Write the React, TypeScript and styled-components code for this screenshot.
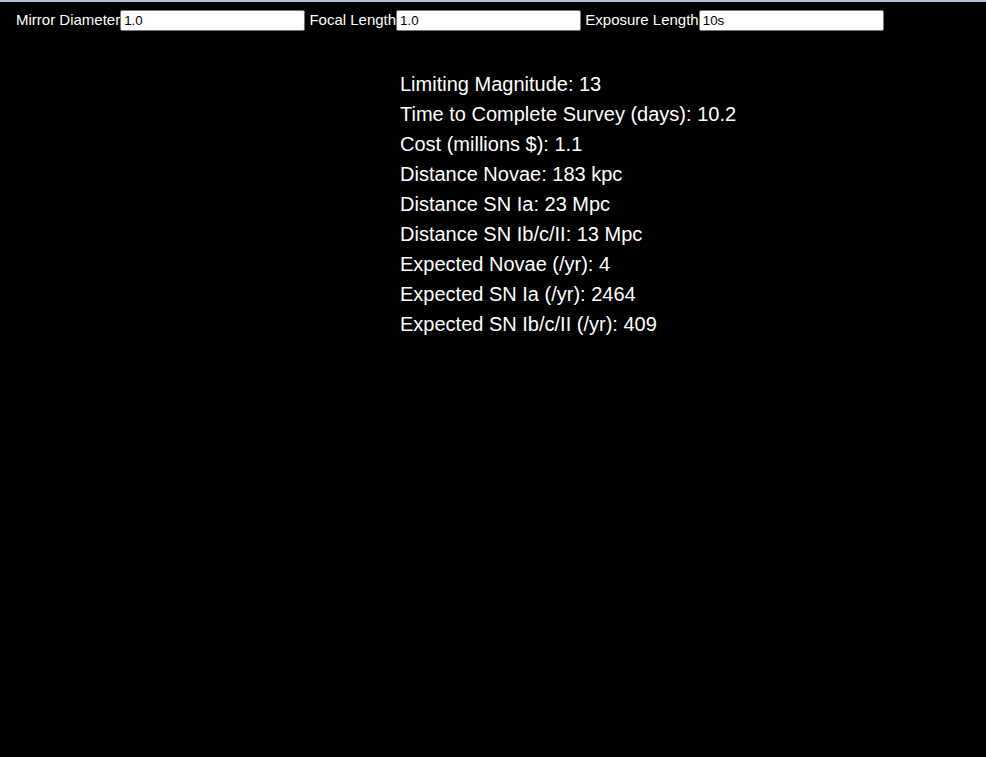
import React, { useState } from 'react'
import styled, { createGlobalStyle } from 'styled-components'

const GlobalStyle = createGlobalStyle`
  html, body {
    margin: 0;
    padding: 0;
    background: #000;
  }
  body {
    font-family: "Liberation Sans", Arial, sans-serif;
    color: #fff;
  }
`

const Page = styled.div`
  min-height: 757px;
  border-top: 2px solid #b3c0dc;
  background: #000;
`

const Toolbar = styled.div`
  display: flex;
  align-items: center;
  padding: 8px 16px 0;
  height: 21px;
`

const Field = styled.label`
  display: flex;
  align-items: baseline;
  font-size: 15px;
  line-height: 17px;
  color: #fff;
  & + & {
    margin-left: 4.2px;
  }
`

const Input = styled.input`
  box-sizing: border-box;
  width: 185px;
  height: 21px;
  margin: 0;
  padding: 1px 3px;
  border: 1px solid #767676;
  border-radius: 2px;
  background: #fff;
  color: #000;
  font-family: "Liberation Sans", Arial, sans-serif;
  font-size: 13.333px;
  outline: none;
`

const Results = styled.div`
  padding: 38px 0 0 400px;
`

const Line = styled.div`
  font-size: 20px;
  line-height: 30px;
  color: #fff;
`

function App() {
  const [diameter, setDiameter] = useState('1.0')
  const [focal, setFocal] = useState('1.0')
  const [exposure, setExposure] = useState('10s')

  const rows: [string, string][] = [
    ['Limiting Magnitude', '13'],
    ['Time to Complete Survey (days)', '10.2'],
    ['Cost (millions $)', '1.1'],
    ['Distance Novae', '183 kpc'],
    ['Distance SN Ia', '23 Mpc'],
    ['Distance SN Ib/c/II', '13 Mpc'],
    ['Expected Novae (/yr)', '4'],
    ['Expected SN Ia (/yr)', '2464'],
    ['Expected SN Ib/c/II (/yr)', '409'],
  ]

  return (
    <>
      <GlobalStyle />
      <Page>
        <Toolbar>
          <Field>
            Mirror Diameter
            <Input value={diameter} onChange={e => setDiameter(e.target.value)} />
          </Field>
          <Field>
            Focal Length
            <Input value={focal} onChange={e => setFocal(e.target.value)} />
          </Field>
          <Field>
            Exposure Length
            <Input value={exposure} onChange={e => setExposure(e.target.value)} />
          </Field>
        </Toolbar>
        <Results>
          {rows.map(([label, value]) => (
            <Line key={label}>{label}: {value}</Line>
          ))}
        </Results>
      </Page>
    </>
  )
}

export default App
